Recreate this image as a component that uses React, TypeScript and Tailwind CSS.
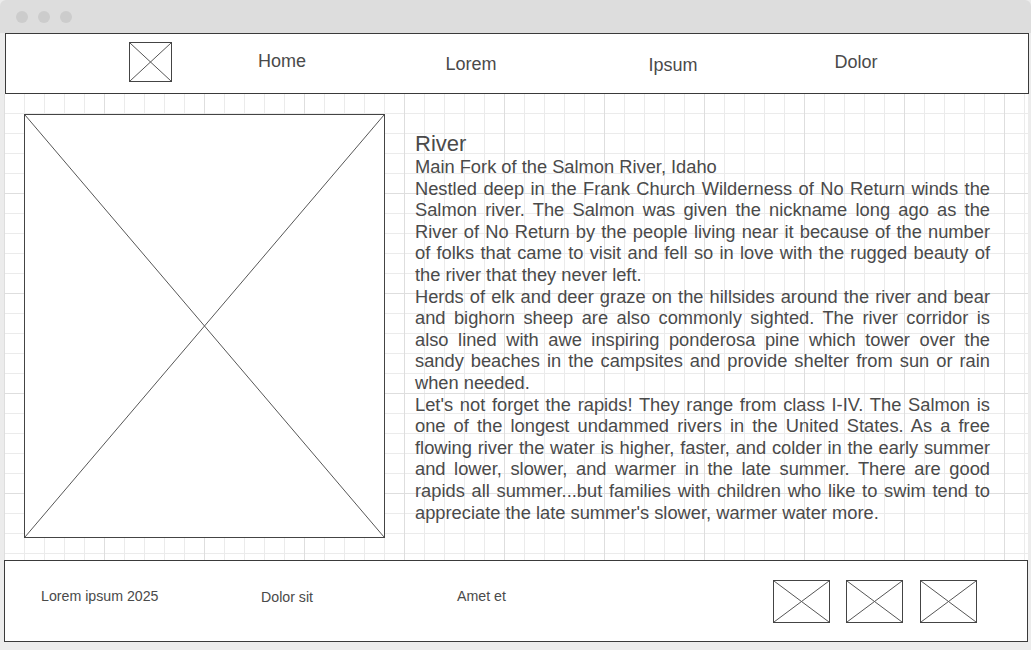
import React from 'react';

function Placeholder({ className }: { className: string }) {
  return (
    <div className={`border border-[#444] bg-white ${className}`}>
      <svg className="block h-full w-full" viewBox="0 0 100 100" preserveAspectRatio="none">
        <line x1="0" y1="0" x2="100" y2="100" stroke="#555" strokeWidth="1" vectorEffect="non-scaling-stroke" />
        <line x1="100" y1="0" x2="0" y2="100" stroke="#555" strokeWidth="1" vectorEffect="non-scaling-stroke" />
      </svg>
    </div>
  );
}

const NAV = [
  { label: 'Home', cls: 'ml-[60px] mt-[17px]' },
  { label: 'Lorem', cls: 'ml-[89px] mt-[20px]' },
  { label: 'Ipsum', cls: 'ml-[102px] mt-[21px]' },
  { label: 'Dolor', cls: 'ml-[83px] mt-[18px]' },
];

export default function App() {
  return (
    <div className="h-[650px] w-[1031px] overflow-hidden bg-[#ececec] font-['Liberation_Sans',Arial,sans-serif] text-[#4a4a4a]">
      {/* window chrome */}
      <div className="flex h-[33px] items-center gap-[10px] rounded-t-[6px] bg-[#dddddd] pl-[16px]">
        <span className="h-[12px] w-[12px] rounded-full bg-[#cccccc]" />
        <span className="h-[12px] w-[12px] rounded-full bg-[#cccccc]" />
        <span className="h-[12px] w-[12px] rounded-full bg-[#cccccc]" />
      </div>

      <div className="ml-[4px] w-[1024px]">
        {/* header */}
        <header className="ml-[1px] flex h-[61px] w-[1024px] items-start border border-[#3a3a3a] bg-white">
          <Placeholder className="ml-[123px] mt-[8px] h-[40px] w-[43px]" />
          {NAV.map(item => (
            <a key={item.label} className={`w-[100px] text-center text-[18px] leading-[1.2] ${item.cls}`}>
              {item.label}
            </a>
          ))}
        </header>

        {/* main */}
        <main className="flex h-[466px] items-start bg-white bg-[linear-gradient(to_right,#dedede_1px,transparent_1px),linear-gradient(to_bottom,#dedede_1px,transparent_1px),linear-gradient(to_right,#ebebeb_1px,transparent_1px),linear-gradient(to_bottom,#ebebeb_1px,transparent_1px)] bg-[size:100px_100px,100px_100px,20px_20px,20px_20px] bg-[position:0_-1px] pl-[20px] pt-[20px]">
          <Placeholder className="h-[424px] w-[361px] shrink-0" />
          <div className="ml-[30px] mt-[18px] w-[575px]">
            <h1 className="text-[22px] leading-[24px]">River</h1>
            <div className="text-justify text-[18.3px] leading-[21.6px]">
              <p>Main Fork of the Salmon River, Idaho</p>
              <p>
                Nestled deep in the Frank Church Wilderness of No Return winds the Salmon river. The Salmon was given
                the nickname long ago as the River of No Return by the people living near it because of the number of
                folks that came to visit and fell so in love with the rugged beauty of the river that they never left.
              </p>
              <p>
                Herds of elk and deer graze on the hillsides around the river and bear and bighorn sheep are also
                commonly sighted. The river corridor is also lined with awe inspiring ponderosa pine which tower over
                the sandy beaches in the campsites and provide shelter from sun or rain when needed.
              </p>
              <p>
                Let's not forget the rapids! They range from class I-IV. The Salmon is one of the longest undammed
                rivers in the United States. As a free flowing river the water is higher, faster, and colder in the
                early summer and lower, slower, and warmer in the late summer. There are good rapids all summer...but
                families with children who like to swim tend to appreciate the late summer's slower, warmer water more.
              </p>
            </div>
          </div>
        </main>

        {/* footer */}
        <footer className="flex h-[82px] w-[1024px] items-start border border-[#3a3a3a] bg-white text-[14.2px] leading-[16px]">
          <span className="ml-[36px] mt-[27px] w-[220px]">Lorem ipsum 2025</span>
          <span className="mt-[28px] w-[196px]">Dolor sit</span>
          <span className="mt-[27px]">Amet et</span>
          <div className="ml-auto mr-[50px] mt-[19px] flex">
            <Placeholder className="h-[43px] w-[57px]" />
            <Placeholder className="ml-[16px] h-[43px] w-[57px]" />
            <Placeholder className="ml-[17px] h-[43px] w-[57px]" />
          </div>
        </footer>
      </div>
    </div>
  );
}
